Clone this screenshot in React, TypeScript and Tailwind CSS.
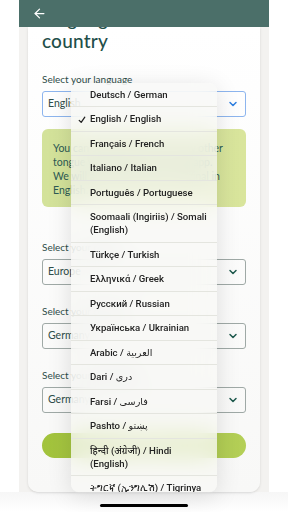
import { ArrowLeft, ChevronDown } from 'lucide-react'

const languages = [
  { label: 'Deutsch / German' },
  { label: 'English / English', checked: true },
  { label: 'Français / French' },
  { label: 'Italiano / Italian' },
  { label: 'Português / Portuguese' },
  { label: 'Soomaali (Ingiriis) / Somali (English)' },
  { label: 'Türkçe / Turkish' },
  { label: 'Ελληνικά / Greek' },
  { label: 'Русский / Russian' },
  { label: 'Українська / Ukrainian' },
  { label: 'Arabic / العربية' },
  { label: 'Dari / دری' },
  { label: 'Farsi / فارسی' },
  { label: 'Pashto / پښتو' },
  { label: 'हिन्दी (अंग्रेजी) / Hindi\n(English)' },
  { label: 'ትግርኛ (ኢንግሊሽ) / Tigrinya' },
]

function Field({ label, value, focused }: { label: string; value: string; focused?: boolean }) {
  return (
    <div>
      <div className="text-[10px] leading-[13px] text-[#2f4d49] mb-[5px]">{label}</div>
      <div
        className={
          focused
            ? 'h-[26px] rounded-[3px] border border-[#8db5ee] flex items-center justify-between pl-[5px] pr-[6px]'
            : 'h-[26px] rounded-[3px] border border-[#9fa9a6] flex items-center justify-between pl-[5px] pr-[6px]'
        }
      >
        <span className="text-[10.5px] text-[#2f4d49]">{value}</span>
        {focused ? (
          <ChevronDown className="w-[12px] h-[12px] text-[#2f7fe0]" strokeWidth={3} />
        ) : (
          <ChevronDown className="w-[12px] h-[12px] text-[#1f5a4e]" strokeWidth={3} />
        )}
      </div>
    </div>
  )
}

export default function App() {
  return (
    <div className="w-[288px] h-[512px] bg-white relative overflow-hidden font-['Lato',_'Noto_Sans',_sans-serif]">
      <div className="ml-[19px] w-[250px] h-[492px] bg-[#f3f2f0] flex flex-col">
        {/* Header */}
        <header className="h-[27px] shrink-0 bg-[#4b6f69] flex items-center pl-[13px] relative z-10">
          <ArrowLeft className="w-[15px] h-[15px] text-white" strokeWidth={2} />
        </header>

        {/* Card, scrolled a little so the first title line sits under the header */}
        <div className="flex-1 min-h-0 px-[9px]">
          <div className="h-full bg-gradient-to-b from-white to-[#f8f8f7] rounded-b-[10px] overflow-hidden px-[14px] shadow-sm">
            <h1 className="-mt-[19px] text-[19px] leading-[22px] font-medium text-[#1f4f4a] tracking-[0.2px]">
              language and
              <br />
              country
            </h1>

            <div className="mt-[21px] flex flex-col">
              <Field label="Select your language" value="English" focused />

              <div className="mt-[12px] rounded-[6px] bg-gradient-to-r from-[#d3e29a] to-[#d9e59c] pt-[12px] pb-[10px] px-[11px] text-[10.5px] leading-[14px] text-[#2d5a54]">
                You can select your own or any other tongue you want to use in the app.
                <br />
                We will also show you the original in English.
              </div>

              <div className="mt-[34px]">
                <Field label="Select your region" value="Europe" />
              </div>
              <div className="mt-[20px]">
                <Field label="Select your country" value="Germany" />
              </div>
              <div className="mt-[20px]">
                <Field label="Select your nationality" value="Germany" />
              </div>

              <button className="mt-[20px] h-[25px] rounded-full bg-gradient-to-r from-[#a2c33c] to-[#b4cf57] text-white text-[11px]">
                Continue
              </button>
            </div>
          </div>
        </div>
      </div>

      {/* Home indicator */}
      <div className="h-[20px] bg-gradient-to-b from-[#f6f6f6] to-white flex items-end justify-center pb-[5px]">
        <div className="w-[88px] h-[3px] rounded-full bg-black" />
      </div>

      {/* Language menu */}
      <div className="absolute left-[71px] top-[82.5px] w-[146px] h-[409.5px] rounded-[8px] overflow-hidden bg-[#f8f8f6]/75 backdrop-blur-md shadow-[0_4px_24px_rgba(0,0,0,0.12)] font-['Roboto',_'Noto_Sans',_'DejaVu_Sans',_sans-serif]">
        {languages.map((item) => (
          <div
            key={item.label}
            className="relative border-b border-[#e4e5df] py-[5.25px] pl-[19px] pr-0 text-[9.6px] leading-[13px] font-medium text-[#222] whitespace-pre-line"
          >
            {item.checked && (
              <svg
                className="absolute left-[7px] top-[8.5px] w-[8px] h-[8px]"
                viewBox="0 0 10 10"
                fill="none"
                stroke="#222"
                strokeWidth="1.6"
                strokeLinecap="round"
                strokeLinejoin="round"
              >
                <path d="M1.5 5.5 L4 8 L8.5 1.5" />
              </svg>
            )}
            {item.label}
          </div>
        ))}
      </div>
    </div>
  )
}
